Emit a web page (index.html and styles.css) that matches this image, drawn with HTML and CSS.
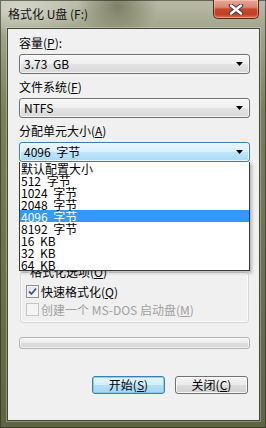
FILE: index.html
```html
<!DOCTYPE html>
<html>
    <head>
        <meta charset="UTF-8" />
        <title>格式化 U盘 (F:)</title>
        <link rel="stylesheet" href="styles.css">
    </head>

    <body>
        <div id="window">
            <div id="titleBar">
                <span id="title">格式化 U盘 (F:)</span>
                <div id="closeButton">
                    <svg width="16" height="11" viewBox="0 0 16 11">
                        <path d="M3 1.5 L13 9.5 M13 1.5 L3 9.5" stroke="#3b3f4a" stroke-width="4.4" stroke-linecap="round" fill="none" />
                        <path d="M3 1.5 L13 9.5 M13 1.5 L3 9.5" stroke="#ffffff" stroke-width="2.4" stroke-linecap="round" fill="none" />
                    </svg>
                </div>
            </div>

            <div id="client">
                <div class="field">
                    <p class="label">容量(<u>P</u>):</p>
                    <div class="combo"><span>3.73 GB</span><i class="arrow"></i></div>
                </div>
                <div class="field">
                    <p class="label">文件系统(<u>F</u>)</p>
                    <div class="combo"><span>NTFS</span><i class="arrow"></i></div>
                </div>
                <div class="field open">
                    <p class="label">分配单元大小(<u>A</u>)</p>
                    <div class="combo focused"><span>4096 字节</span><i class="arrow"></i></div>
                    <!-- the open dropdown covers the controls below it -->
                    <ul id="dropList">
                        <li>默认配置大小</li>
                        <li>512 字节</li>
                        <li>1024 字节</li>
                        <li>2048 字节</li>
                        <li class="selected">4096 字节</li>
                        <li>8192 字节</li>
                        <li>16 KB</li>
                        <li>32 KB</li>
                        <li>64 KB</li>
                    </ul>
                </div>

                <div id="hiddenControls">
                    <div class="button wide">还原设备的默认值(<u>D</u>)</div>
                    <p class="label">卷标(<u>L</u>)</p>
                    <div class="textbox"></div>
                </div>

                <fieldset id="options">
                    <legend>格式化选项(<u>O</u>)</legend>
                    <div class="option">
                        <span class="check">
                            <svg width="11" height="11" viewBox="0 0 11 11">
                                <path d="M2 5.5 L4.5 8 L9 2.5" stroke="#3e5891" stroke-width="1.8" fill="none" />
                            </svg>
                        </span>
                        <span>快速格式化(<u>Q</u>)</span>
                    </div>
                    <div class="option disabled">
                        <span class="check"></span>
                        <span>创建一个 MS-DOS 启动盘(<u>M</u>)</span>
                    </div>
                </fieldset>

                <div id="progress"></div>

                <div id="buttonRow">
                    <div class="button default">开始(<u>S</u>)</div>
                    <div class="button">关闭(<u>C</u>)</div>
                </div>
            </div>
        </div>
    </body>
</html>
```

FILE: styles.css
```css
* {
    margin: 0;
    padding: 0;
    box-sizing: border-box;
}

body {
    width: 266px;
    height: 428px;
    overflow: hidden;
    font-family: "Noto Sans CJK SC", sans-serif;
    font-size: 12px;
    color: #000;
}

u {
    text-decoration: underline;
}

#window {
    display: flex;
    flex-direction: column;
    width: 266px;
    height: 428px;
    background:
        radial-gradient(ellipse 40px 34px at 118px 6px, rgba(96, 100, 70, 0.65), transparent),
        radial-gradient(ellipse 70px 30px at 20px 8px, rgba(220, 222, 212, 0.8), transparent),
        linear-gradient(to bottom, #b9bba7 0, #a3a68d 28px, #7a7f5c 110px, #6a6f4b 300px, #5f6442 428px);
    box-shadow: inset 0 0 0 1px rgba(40, 42, 28, 0.6);
}

#titleBar {
    display: flex;
    justify-content: space-between;
    align-items: flex-start;
    height: 28px;
    padding-right: 7px;
}

#title {
    padding: 7px 0 0 8px;
    line-height: 14px;
    color: #111;
}

#closeButton {
    display: flex;
    align-items: center;
    justify-content: center;
    width: 46px;
    height: 19px;
    border: 1px solid #5a2417;
    border-top: none;
    border-radius: 0 0 5px 5px;
    background: linear-gradient(to bottom, #e6a797 0, #d98670 40%, #c5472c 52%, #c13d22 78%, #dc6f50 100%);
    box-shadow: inset 0 0 0 1px rgba(255, 220, 210, 0.45);
}

#client {
    flex: 1;
    margin: 0 6px 7px 7px;
    padding: 7px 9px 0 11px;
    background-color: #f0f0f0;
    border: 1px solid #44473a;
    box-shadow: 0 0 0 1px rgba(230, 232, 220, 0.35);
}

.field {
    margin-bottom: 6px;
}

.field.open {
    position: relative;
    margin-bottom: 0;
}

.label {
    height: 14px;
    line-height: 14px;
    margin-bottom: 4px;
}

.combo {
    display: flex;
    align-items: center;
    justify-content: space-between;
    height: 20px;
    padding: 0 6px 0 4px;
    border: 1px solid #707070;
    border-radius: 3px;
    background: linear-gradient(to bottom, #f7f7f7 0, #efefef 50%, #e3e3e3 50%, #d9d9d9 100%);
    box-shadow: inset 0 0 0 1px rgba(255, 255, 255, 0.7);
    word-spacing: 3px;
    line-height: 14px;
}

.combo.focused {
    border-color: #3c7fb1;
    background: linear-gradient(to bottom, #eaf6fd 0, #d9f0fc 50%, #bee6fd 50%, #a9daf5 100%);
}

.arrow {
    width: 7px;
    height: 4px;
    background-color: #000;
    clip-path: polygon(0 0, 100% 0, 50% 100%);
}

#dropList {
    position: absolute;
    top: 100%;
    left: 0;
    right: 0;
    z-index: 2;
    list-style: none;
    background-color: #fff;
    border: 1px solid #3a3a3a;
    border-top: none;
    box-shadow: 2px 2px 3px rgba(0, 0, 0, 0.25);
    word-spacing: 3px;
}

#dropList li {
    height: 12px;
    line-height: 13px;
    padding-left: 1px;
    white-space: nowrap;
}

#dropList li.selected {
    background-color: #3399ff;
    color: #fff;
}

/* controls under the open list, kept for the flow */
#hiddenControls {
    padding-top: 6px;
    height: 103px;
}

#hiddenControls .label {
    margin-top: 8px;
}

.textbox {
    height: 20px;
    background-color: #fff;
    border: 1px solid #abadb3;
}

#options {
    margin: 0 1px;
    padding: 5px 5px 6px 5px;
    border: 1px solid #d5d9dc;
    border-radius: 3px;
    box-shadow: inset 0 0 0 1px #fafafa;
}

#options legend {
    margin-left: 2px;
    padding: 0 2px;
    line-height: 14px;
}

.option {
    display: flex;
    align-items: center;
    gap: 2px;
    height: 14px;
}

.option + .option {
    margin-top: 4px;
}

.check {
    display: flex;
    align-items: center;
    justify-content: center;
    width: 13px;
    height: 13px;
    border: 1px solid #8e8f8f;
    background: linear-gradient(135deg, #dedede 0, #f6f6f6 70%, #ffffff 100%);
    box-shadow: inset 0 0 0 1px #f4f4f4;
}

.option.disabled {
    color: #a0a0a0;
}

.option.disabled .check {
    border-color: #c5c5c5;
    background: #f4f4f4;
}

#progress {
    height: 12px;
    margin-top: 14px;
    border: 1px solid #b2b2b2;
    border-radius: 3px;
    background: linear-gradient(to bottom, #f6f6f6 0, #ebebeb 45%, #dddddd 55%, #d6d6d6 100%);
    box-shadow: inset 0 0 0 1px rgba(255, 255, 255, 0.6);
}

#buttonRow {
    display: flex;
    justify-content: flex-end;
    gap: 10px;
    margin-top: 27px;
    padding-right: 2px;
}

.button {
    width: 73px;
    height: 18px;
    line-height: 16px;
    text-align: center;
    border: 1px solid #707070;
    border-radius: 3px;
    background: linear-gradient(to bottom, #f3f3f3 0, #ebebeb 50%, #dddddd 50%, #d0d0d0 100%);
    box-shadow: inset 0 0 0 1px rgba(255, 255, 255, 0.8);
}

.button.default {
    border-color: #3c7fb1;
    background: linear-gradient(to bottom, #e5f4fc 0, #d4eefb 50%, #b5e0f8 50%, #a3d6f3 100%);
    box-shadow: inset 0 0 0 1px rgba(120, 200, 240, 0.8);
}

.button.wide {
    width: 130px;
    height: 22px;
    line-height: 20px;
}
```
